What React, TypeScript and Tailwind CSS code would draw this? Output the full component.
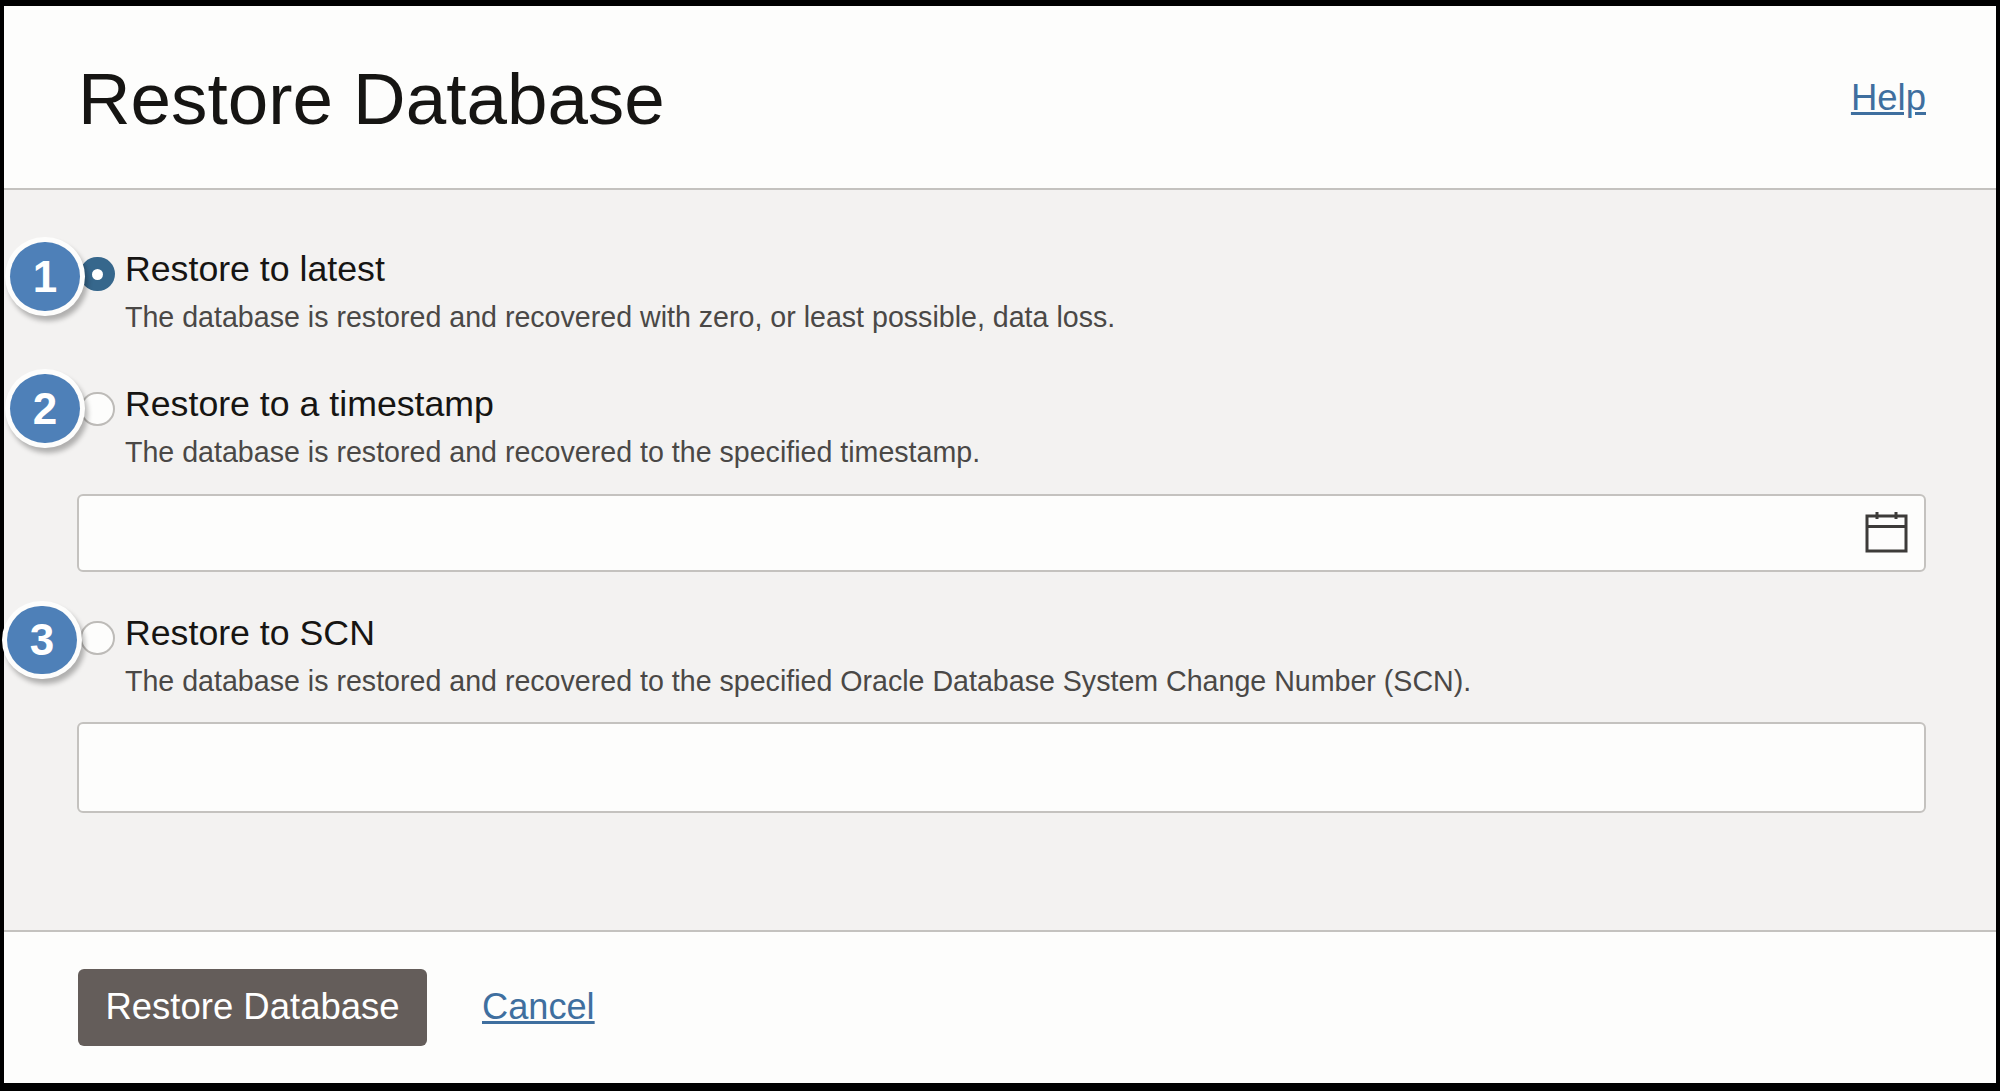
const Badge = ({ n, className }: { n: number; className: string }) => (
  <div
    className={`absolute flex items-center justify-center rounded-full bg-[#4e80b8] text-[44px] leading-none font-bold text-white shadow-[0_0_0_5px_#fdfdfc,3px_5px_5px_5px_rgba(0,0,0,0.28)] ${className}`}
  >
    {n}
  </div>
);

const Radio = ({ checked }: { checked?: boolean }) =>
  checked ? (
    <div className="mt-[7px] ml-[3px] flex h-[34px] w-[35px] shrink-0 items-center justify-center rounded-full bg-[#36678c]">
      <div className="h-[11px] w-[11px] rounded-full bg-white" />
    </div>
  ) : (
    <div className="mt-[7px] ml-[3px] h-[34px] w-[35px] shrink-0 rounded-full border-2 border-[#bdbbb8] bg-[#fdfdfc]" />
  );

const Option = ({ title, desc, checked }: { title: string; desc: string; checked?: boolean }) => (
  <div className="flex">
    <Radio checked={checked} />
    <div className="ml-[10px]">
      <div className="text-[35.7px] leading-[38px] text-[#161513]">{title}</div>
      <div className="mt-[9px] text-[28.6px] leading-[40px] text-[#4a4846]">{desc}</div>
    </div>
  </div>
);

const CalendarIcon = () => (
  <svg width="44" height="42" viewBox="0 0 44 42" fill="none" stroke="#3d3b39" strokeWidth="3">
    <rect x="2" y="5" width="39" height="35" />
    <path d="M2 15.5H41" />
    <path d="M12 1V8M31 1V8" />
  </svg>
);

export default function App() {
  return (
    <div className="flex h-[1091px] w-[2000px] flex-col overflow-hidden bg-black pt-[6px] pr-[4px] pb-[8px] pl-[4px] font-['Liberation_Sans',Arial,sans-serif]">
      <div className="flex h-[184px] shrink-0 items-center justify-between border-b-2 border-[#c4c2bf] bg-[#fdfdfc] pr-[70px] pl-[74px]">
        <h1 className="pt-[4px] text-[72.8px] leading-none font-normal text-[#161513]">Restore Database</h1>
        <a className="pt-[2px] text-[36.5px] text-[#3f6f9f] underline">Help</a>
      </div>

      <div className="flex-1 bg-[#f3f2f1] pt-[60px] pr-[70px] pl-[73px]">
        <div className="relative">
          <Badge n={1} className="-top-[8px] -left-[67px] h-[69px] w-[70px]" />
          <Option
            checked
            title="Restore to latest"
            desc="The database is restored and recovered with zero, or least possible, data loss."
          />
        </div>

        <div className="relative mt-[48px]">
          <Badge n={2} className="-top-[11px] -left-[67px] h-[69px] w-[70px]" />
          <Option
            title="Restore to a timestamp"
            desc="The database is restored and recovered to the specified timestamp."
          />
          <div className="mt-[22px] flex h-[78px] items-center justify-end rounded-[6px] border-2 border-[#c4c2bf] bg-[#fdfdfc] pr-[15px] pb-[2px]">
            <CalendarIcon />
          </div>
        </div>

        <div className="relative mt-[42px]">
          <Badge n={3} className="-top-[8px] -left-[70px] h-[68px] w-[70px]" />
          <Option
            title="Restore to SCN"
            desc="The database is restored and recovered to the specified Oracle Database System Change Number (SCN)."
          />
          <div className="mt-[21px] h-[91px] rounded-[6px] border-2 border-[#c4c2bf] bg-[#fdfdfc]" />
        </div>
      </div>

      <div className="flex h-[153px] shrink-0 items-start border-t-2 border-[#c4c2bf] bg-[#fdfdfc] pt-[37px] pl-[74px]">
        <button className="h-[77px] w-[349px] rounded-[6px] bg-[#645d5a] text-[36.5px] text-white">Restore Database</button>
        <a className="mt-[15px] ml-[55px] text-[36.2px] leading-[46px] text-[#3f6f9f] underline">Cancel</a>
      </div>
    </div>
  );
}
